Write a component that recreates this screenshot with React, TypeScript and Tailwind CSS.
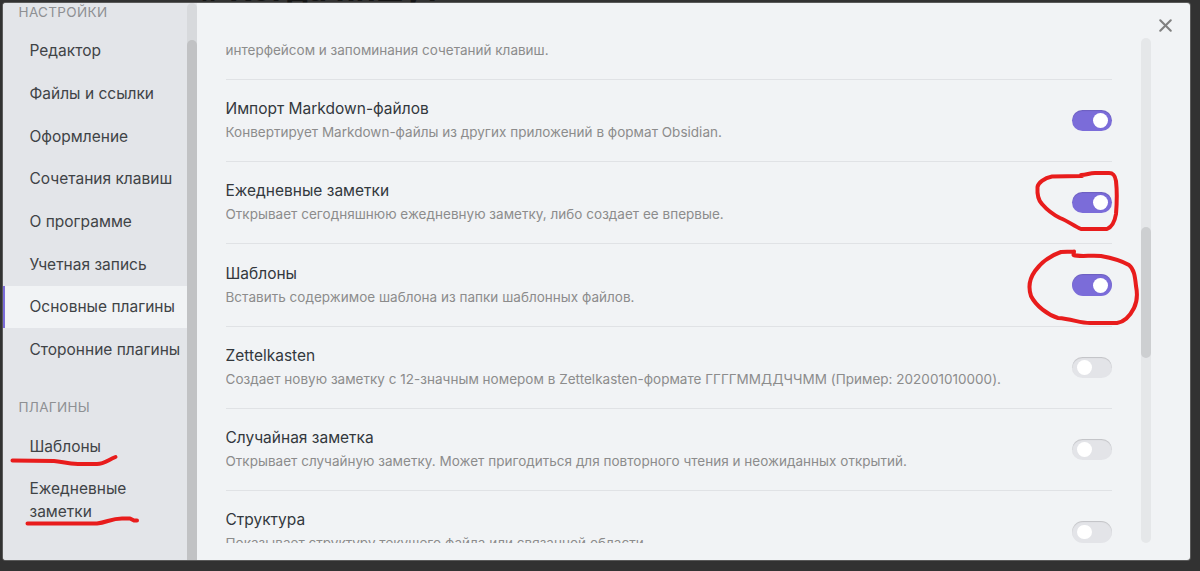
import { X } from 'lucide-react';

const settingsTabs = [
  'Редактор',
  'Файлы и ссылки',
  'Оформление',
  'Сочетания клавиш',
  'О программе',
  'Учетная запись',
  'Основные плагины',
  'Сторонние плагины',
];

const plugins = [
  {
    name: 'Импорт Markdown-файлов',
    description: 'Конвертирует Markdown-файлы из других приложений в формат Obsidian.',
    enabled: true,
  },
  {
    name: 'Ежедневные заметки',
    description: 'Открывает сегодняшнюю ежедневную заметку, либо создает ее впервые.',
    enabled: true,
  },
  {
    name: 'Шаблоны',
    description: 'Вставить содержимое шаблона из папки шаблонных файлов.',
    enabled: true,
  },
  {
    name: 'Zettelkasten',
    description:
      'Создает новую заметку с 12-значным номером в Zettelkasten-формате ГГГГММДДЧЧММ (Пример: 202001010000).',
    enabled: false,
  },
  {
    name: 'Случайная заметка',
    description:
      'Открывает случайную заметку. Может пригодиться для повторного чтения и неожиданных открытий.',
    enabled: false,
  },
  {
    name: 'Структура',
    description: 'Показывает структуру текущего файла или связанной области.',
    enabled: false,
  },
];

function Toggle({ enabled }: { enabled: boolean }) {
  return (
    <div
      className={`flex h-[21.5px] w-[40.5px] shrink-0 items-center rounded-full ${
        enabled
          ? 'justify-end bg-[#7b6cd9] pr-[4.5px] shadow-[inset_0_1px_1px_rgba(0,0,0,0.12)]'
          : 'justify-start bg-[#e3e4e8] pl-[5.5px] shadow-[inset_0_1px_1px_rgba(0,0,0,0.15)]'
      }`}
    >
      <div className={`rounded-full bg-white ${enabled ? 'size-[15px]' : 'size-[14.5px]'}`} />
    </div>
  );
}

function Sidebar() {
  return (
    <aside className="flex w-[194px] shrink-0 bg-[#e3e5e9]">
      <nav className="w-[184px] shrink-0 text-[15.5px] text-[#3f4346]">
        <div className="h-[26.5px] pl-[15.5px] text-[13.5px] leading-[19px] tracking-[0.35px] text-[#8e9093]">НАСТРОЙКИ</div>
        {settingsTabs.map((tab) => (
          <div
            key={tab}
            className={`flex h-[42.7px] items-center whitespace-nowrap border-l-2 pl-[24.5px] ${
              tab === 'Основные плагины' ? 'border-[#7b6cd9] bg-[#f1f3f5]' : 'border-transparent'
            }`}
          >
            {tab}
          </div>
        ))}
        <div className="mt-[25px] h-[29px] pl-[15.5px] text-[13.5px] leading-[22px] tracking-[0.3px] text-[#8e9093]">ПЛАГИНЫ</div>
        <div className="flex h-[42.7px] items-center pl-[26.5px]">Шаблоны</div>
        <div className="w-[150px] pt-[9.5px] pl-[26.5px] leading-[23px]">Ежедневные заметки</div>
      </nav>
      <div className="w-2.5 overflow-hidden rounded-t-full bg-[#d7d9dc] pt-[37px]">
        <div className="h-full rounded-t-full bg-[#c1c2c4]" />
      </div>
    </aside>
  );
}

// Hand-drawn marker strokes over the window
function Marks() {
  return (
    <svg
      className="pointer-events-none absolute inset-0"
      width="1200"
      height="571"
      fill="none"
      stroke="#e81c1c"
      strokeWidth="4"
      strokeLinecap="round"
      strokeLinejoin="round"
    >
      <path d="M12.500 460.500L54 461C62 461.500 67 464 78 464H97C104 464 108 460 115.500 457" />
      <path d="M27.500 523.500H97C107 522.500 111 518.500 122 518.500H130L134 520.500H137" />
      <path d="M1082 176L1052 176.500C1044 178 1038 183 1037.500 187C1037 195 1038 200 1042 204C1048 211 1054 215 1060 218C1068 221 1074 226 1081 229H1107C1112 227 1115 220 1116 214C1117 202 1117 190 1116 181C1115 175 1113 173 1109 173H1095C1089 173 1087 175 1081 175" />
      <path d="M1074 251.500L1073.500 255C1079 257 1092 255 1101 256C1112 258 1122 261 1129 265C1134 269 1135 276 1136 286C1138 296 1137 302 1134 308C1130 316 1124 322 1117 323H1090C1080 323 1072 319 1058 318C1048 315 1036 306 1031 296C1028 287 1030 278 1035 271C1042 261 1050 256 1061 252C1067 251.500 1069 251.500 1074 251.500" />
    </svg>
  );
}

export default function App() {
  return (
    <div className="relative h-[571px] w-[1200px] overflow-hidden bg-[#323232] pt-[3px] pl-[3px] font-['Inter','Liberation_Sans',sans-serif]">
      <div className="absolute -top-[30px] left-[200px] text-[32px] leading-[40px] font-bold tracking-[0.5px] text-[#151515]"># Когда пишут</div>
      <div className="relative flex h-[557px] w-[1187px] overflow-hidden rounded-[3px] bg-[#f1f3f5] shadow-[0_0_0_1px_rgba(150,150,150,0.4)]">
        <Sidebar />
        <main className="mt-[35px] ml-[28.5px] h-[504.5px] w-[887px] shrink-0 overflow-hidden pr-[0.5px]">
          <div className="h-[40.8px] pt-px text-[13.5px] leading-[22px] text-[#8c8c8c]">
            интерфейсом и запоминания сочетаний клавиш.
          </div>
          {plugins.map((plugin) => (
            <div key={plugin.name} className="flex h-[82.3px] items-center justify-between border-t border-[#e0e2e5]">
              <div>
                <div className="text-[15.5px] leading-[24px] text-[#33383d]">{plugin.name}</div>
                <div className="text-[13.5px] leading-[23px] tracking-[0.02px] whitespace-nowrap text-[#8c8c8c]">
                  {plugin.description}
                </div>
              </div>
              <Toggle enabled={plugin.enabled} />
            </div>
          ))}
        </main>
        <div className="mt-[35px] ml-[28.5px] h-[505px] w-2.5 shrink-0 rounded-full bg-[#e5e7e9] pt-[189px]">
          <div className="h-[131px] rounded-full bg-[#cdcfd1]" />
        </div>
        <X className="mt-3 ml-[4px] size-[21px] shrink-0 text-[#808080]" strokeWidth={2.4} />
      </div>
      <Marks />
    </div>
  );
}
